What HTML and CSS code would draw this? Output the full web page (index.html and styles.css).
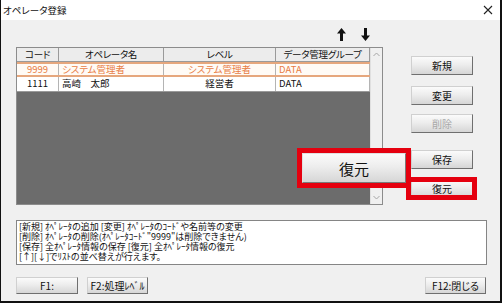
FILE: index.html
```html
<!DOCTYPE html>
<html lang="ja">
<head>
    <meta charset="UTF-8">
    <title>オペレータ登録</title>
    <link rel="stylesheet" href="styles.css">
</head>
<body>
<div class="window">
    <div class="titlebar">
        <span class="title">オペレータ登録</span>
        <svg class="close" width="10" height="10" viewBox="0 0 10 10"><path d="M1 1L9 9M9 1L1 9" stroke="#222" stroke-width="1.1"/></svg>
    </div>
    <div class="body">
        <div class="sort-arrows">
            <svg width="9" height="13" viewBox="0 0 9 13"><path d="M4.5 0L9 5.5H6V13H3V5.5H0Z" fill="#111"/></svg>
            <svg width="9" height="13" viewBox="0 0 9 13"><path d="M4.5 13L9 7.5H6V0H3V7.5H0Z" fill="#111"/></svg>
        </div>
        <div class="main">
            <div class="list">
                <div class="grid">
                    <div class="row head">
                        <div class="cell c">コード</div>
                        <div class="cell c">オペレータ名</div>
                        <div class="cell c">レベル</div>
                        <div class="cell c">データ管理グループ</div>
                    </div>
                    <div class="row selected">
                        <div class="cell c">9999</div>
                        <div class="cell">システム管理者</div>
                        <div class="cell c">システム管理者</div>
                        <div class="cell">DATA</div>
                    </div>
                    <div class="row">
                        <div class="cell c">1111</div>
                        <div class="cell">高崎　太郎</div>
                        <div class="cell c">経営者</div>
                        <div class="cell">DATA</div>
                    </div>
                    <div class="empty"></div>
                </div>
                <div class="scrollbar">
                    <svg width="7" height="5" viewBox="0 0 7 5"><path d="M0.5 4L3.5 1L6.5 4" fill="none" stroke="#a6a6a6"/></svg>
                    <svg width="7" height="5" viewBox="0 0 7 5"><path d="M0.5 1L3.5 4L6.5 1" fill="none" stroke="#a6a6a6"/></svg>
                </div>
            </div>
            <div class="side">
                <button class="btn b-new">新規</button>
                <button class="btn b-edit">変更</button>
                <button class="btn b-del" disabled>削除</button>
                <button class="btn b-save">保存</button>
                <div class="marked">
                    <button class="btn b-restore">復元</button>
                </div>
            </div>
        </div>
        <div class="memo">
            <p>[新規] ｵﾍﾟﾚｰﾀの追加 [変更] ｵﾍﾟﾚｰﾀのｺｰﾄﾞや名前等の変更</p>
            <p>[削除] ｵﾍﾟﾚｰﾀの削除(ｵﾍﾟﾚｰﾀｺｰﾄﾞ"9999"は削除できません)</p>
            <p>[保存] 全ｵﾍﾟﾚｰﾀ情報の保存 [復元] 全ｵﾍﾟﾚｰﾀ情報の復元</p>
            <p>[↑][↓]でﾘｽﾄの並べ替えが行えます。</p>
        </div>
        <div class="footer">
            <button class="btn fkey">F1:</button>
            <button class="btn fkey f2">F2:処理ﾚﾍﾞﾙ</button>
            <button class="btn fkey f12">F12:閉じる</button>
        </div>
        <!-- 拡大表示の注記 -->
        <div class="zoom-callout">
            <button class="btn big">復元</button>
        </div>
    </div>
</div>
</body>
</html>
```

FILE: styles.css
```css
*{
    box-sizing: border-box;
}
body{
    margin: 0;
    font-family: "Noto Sans CJK JP", "Liberation Sans", sans-serif;
    font-feature-settings: "palt";
    font-size: 10px;
    color: #111;
}
.window{
    width: 502px;
    height: 303px;
    display: flex;
    flex-direction: column;
    background: #f0f0f0;
    border-left: 1px solid #111;
    border-right: 2px solid #111;
    border-bottom: 2px solid #111;
}
.titlebar{
    height: 20px;
    flex: none;
    background: #fff;
    display: flex;
    align-items: center;
    justify-content: space-between;
    padding: 0 7px 0 2px;
}
.title{
    font-size: 9.5px;
}
.body{
    flex: 1;
    position: relative;
    padding: 0 13px 0 15px;
}
/* 並べ替え矢印 */
.sort-arrows{
    height: 27px;
    display: flex;
    align-items: center;
    gap: 15px;
    padding-left: 321px;
    padding-top: 1px;
}
.main{
    display: flex;
    height: 158px;
}
.list{
    width: 367px;
    border: 1px solid #8c8c8c;
    display: flex;
    background: #fff;
}
.grid{
    flex: 1;
    display: flex;
    flex-direction: column;
}
.row{
    display: grid;
    grid-template-columns: 42px 105px 112px 1fr;
    height: 14px;
    background: #fff;
    font-size: 9.5px;
}
.cell{
    border-right: 1px solid #b4b4b4;
    line-height: 13px;
    padding-left: 3px;
    white-space: nowrap;
}
.cell.c{
    text-align: center;
    padding-left: 0;
}
.row.head{
    background: #ececec;
    height: 14px;
    font-size: 9.5px;
    letter-spacing: -0.3px;
    border-bottom: 1px solid #9a9a9a;
}
.row.head .cell{
    border-right-color: #9a9a9a;
}
.row.selected{
    height: 15px;
    background: #fffbf6;
    border-top: 2px solid #e6a77d;
    border-bottom: 2px solid #e6a77d;
    color: #e87d45;
}
.row.selected .cell{
    line-height: 11px;
}
.empty{
    flex: 1;
    background: #6c6c6c;
    border-top: 1px solid #9a9a9a;
}
.scrollbar{
    width: 12px;
    background: #f0f0f0;
    border-left: 1px solid #e0e0e0;
    display: flex;
    flex-direction: column;
    align-items: center;
    justify-content: space-between;
    padding: 4px 0 4px;
}
/* 右側のボタン列 */
.side{
    margin-left: 28px;
    width: 62px;
    display: flex;
    flex-direction: column;
}
.btn{
    font-family: inherit;
    font-size: 10px;
    font-feature-settings: "palt";
    color: #111;
    height: 19px;
    padding: 0;
    background: linear-gradient(#fbfbfb, #ededed 45%, #d6d6d6);
    border: 1px solid;
    border-color: #d0d0d0 #6f6f6f #6f6f6f #d0d0d0;
    border-radius: 0;
}
.btn:disabled{
    color: #a8a8a8;
}
.b-new{ margin-top: 9px; }
.b-edit{ margin-top: 11px; }
.b-del{ margin-top: 9px; }
.b-save{ margin-top: 17px; }
.marked{
    margin-top: 10px;
    position: relative;
    display: flex;
    flex-direction: column;
}
.marked::after{
    content: "";
    position: absolute;
    top: -2px;
    bottom: -2px;
    left: -5px;
    right: -4px;
    border: 5px solid #e5000f;
}
.memo{
    margin-top: 15px;
    width: 471px;
    height: 45px;
    background: #fff;
    border: 1px solid #858585;
    padding: 1px 2px;
    font-size: 9px;
    white-space: nowrap;
}
.memo p{
    margin: 0;
    height: 10px;
    line-height: 10px;
}
.footer{
    margin-top: 12px;
    display: flex;
    width: 470px;
}
.fkey{
    height: 17px;
    width: 62px;
}
.f2{
    margin-left: 9px;
    width: 61px;
}
.f12{
    margin-left: auto;
    width: 61px;
}
/* 拡大した復元ボタン（注記） */
.zoom-callout{
    position: absolute;
    left: 296px;
    top: 128px;
    width: 114px;
    height: 40px;
    border: 5px solid #e5000f;
    display: flex;
}
.btn.big{
    flex: 1;
    height: auto;
    font-size: 15px;
    border-color: #e0e0e0 #7a7a7a #7a7a7a #e0e0e0;
}
```
